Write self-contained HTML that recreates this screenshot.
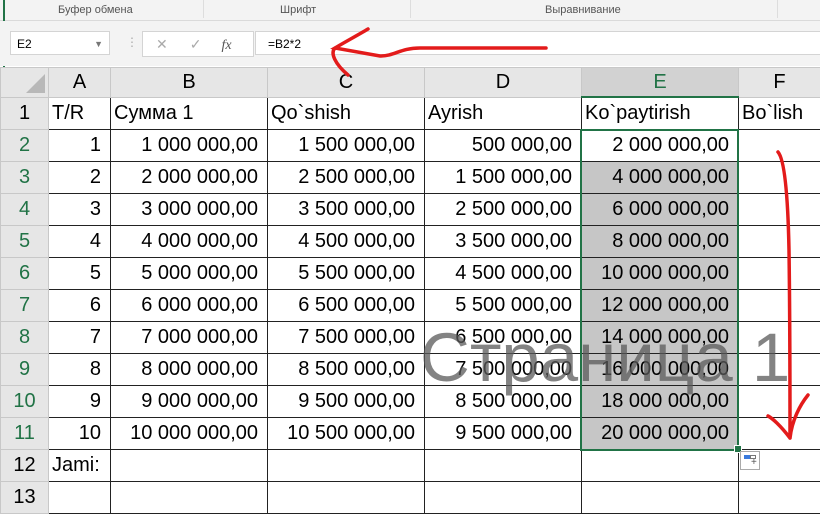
<!DOCTYPE html><html><head><style>
body{margin:0;width:820px;height:496px;overflow:hidden;background:#fff;font-family:"Liberation Sans",sans-serif;position:relative}
.ab{position:absolute}
.rib{left:0;top:0;width:820px;height:20px;background:#f3f3f3;border-bottom:1px solid #dadada;font-size:11px;color:#555}
.fb{left:0;top:21px;width:820px;height:45px;background:#f3f3f3}
.box{background:#fff;border:1px solid #d4d4d4;position:absolute}
table{position:absolute;left:0;top:67px;border-collapse:collapse;font-size:20px;table-layout:fixed;width:820px}
td{height:31px;padding:0 9px 0 3px;white-space:nowrap;border:1px solid #222;overflow:hidden}
tr.h td{height:28px;background:#e6e6e6;border:1px solid #c8c8c8;text-align:center;color:#000;font-size:20px;padding:0}
td.rh{background:#e6e6e6;border-color:#c8c8c8;text-align:center;color:#217346;padding:0}
td.n{text-align:right}
td.s{background:#c6c6c6}
</style></head><body>
<div class="ab rib"><span class="ab" style="left:58px;top:4px">Буфер обмена</span><span class="ab" style="left:280px;top:4px">Шрифт</span><span class="ab" style="left:545px;top:4px">Выравнивание</span>
<span class="ab" style="left:203px;top:0;width:1px;height:18px;background:#ddd"></span><span class="ab" style="left:410px;top:0;width:1px;height:18px;background:#ddd"></span><span class="ab" style="left:777px;top:0;width:1px;height:18px;background:#ddd"></span></div>
<div class="ab" style="left:3px;top:0;width:2px;height:496px;background:#217346"></div>
<div class="ab fb">
<div class="box" style="left:10px;top:10px;width:100px;height:24px;font-size:12px;line-height:24px;padding-left:6px;box-sizing:border-box">E2<span style="position:absolute;right:6px;color:#777;font-size:9px">▼</span></div>
<div class="ab" style="left:126px;top:14px;color:#aaa;font-size:12px">⋮</div>
<div class="box" style="left:142px;top:10px;width:110px;height:24px;color:#aaa;font-size:14px;line-height:24px"><span style="margin-left:13px">✕</span><span style="margin-left:22px">✓</span><span style="margin-left:20px;color:#555;font-style:italic;font-family:'Liberation Serif'">fx</span></div>
<div class="box" style="left:255px;top:10px;width:570px;height:24px;font-size:12px;line-height:24px;padding-left:12px;box-sizing:border-box">=B2*2</div>
</div>
<table>
<colgroup><col style="width:48px"><col style="width:62px"><col style="width:157px"><col style="width:157px"><col style="width:157px"><col style="width:157px"><col style="width:82px"></colgroup>
<tr class="h"><td style="padding:0;position:relative"><svg class="ab" style="left:25px;top:6px" width="20" height="20"><polygon points="19,0 19,19 0,19" fill="#b8b8b8"/></svg></td><td>A</td><td>B</td><td>C</td><td>D</td><td style="background:#d2d2d2;border-bottom:2px solid #217346;color:#217346">E</td><td>F</td></tr>
<tr><td class="rh" style="color:#000">1</td><td>T/R</td><td>Сумма 1</td><td>Qo`shish</td><td>Ayrish</td><td>Ko`paytirish</td><td>Bo`lish</td></tr>
<tr><td class="rh">2</td><td class="n">1</td><td class="n">1 000 000,00</td><td class="n">1 500 000,00</td><td class="n">500 000,00</td><td class="n">2 000 000,00</td><td></td></tr>
<tr><td class="rh">3</td><td class="n">2</td><td class="n">2 000 000,00</td><td class="n">2 500 000,00</td><td class="n">1 500 000,00</td><td class="n s">4 000 000,00</td><td></td></tr>
<tr><td class="rh">4</td><td class="n">3</td><td class="n">3 000 000,00</td><td class="n">3 500 000,00</td><td class="n">2 500 000,00</td><td class="n s">6 000 000,00</td><td></td></tr>
<tr><td class="rh">5</td><td class="n">4</td><td class="n">4 000 000,00</td><td class="n">4 500 000,00</td><td class="n">3 500 000,00</td><td class="n s">8 000 000,00</td><td></td></tr>
<tr><td class="rh">6</td><td class="n">5</td><td class="n">5 000 000,00</td><td class="n">5 500 000,00</td><td class="n">4 500 000,00</td><td class="n s">10 000 000,00</td><td></td></tr>
<tr><td class="rh">7</td><td class="n">6</td><td class="n">6 000 000,00</td><td class="n">6 500 000,00</td><td class="n">5 500 000,00</td><td class="n s">12 000 000,00</td><td></td></tr>
<tr><td class="rh">8</td><td class="n">7</td><td class="n">7 000 000,00</td><td class="n">7 500 000,00</td><td class="n">6 500 000,00</td><td class="n s">14 000 000,00</td><td></td></tr>
<tr><td class="rh">9</td><td class="n">8</td><td class="n">8 000 000,00</td><td class="n">8 500 000,00</td><td class="n">7 500 000,00</td><td class="n s">16 000 000,00</td><td></td></tr>
<tr><td class="rh">10</td><td class="n">9</td><td class="n">9 000 000,00</td><td class="n">9 500 000,00</td><td class="n">8 500 000,00</td><td class="n s">18 000 000,00</td><td></td></tr>
<tr><td class="rh">11</td><td class="n">10</td><td class="n">10 000 000,00</td><td class="n">10 500 000,00</td><td class="n">9 500 000,00</td><td class="n s">20 000 000,00</td><td></td></tr>
<tr><td class="rh" style="color:#000">12</td><td>Jami:</td><td></td><td></td><td></td><td></td><td></td></tr>
<tr><td class="rh" style="color:#000">13</td><td></td><td></td><td></td><td></td><td></td><td></td></tr>
</table>
<div class="ab" style="left:580px;top:129px;width:155px;height:318px;border:2px solid #217346"></div>
<div class="ab" style="left:734px;top:445px;width:6px;height:6px;background:#217346;border:1px solid #fff"></div>
<div class="ab" style="left:740px;top:451px;width:18px;height:17px;border:1px solid #aaa;background:#fff"><div class="ab" style="left:3px;top:3px;width:6px;height:4px;background:#3b7bdc"></div><div class="ab" style="left:9px;top:3px;width:6px;height:4px;border:1px solid #777;box-sizing:border-box"></div><span class="ab" style="left:10px;top:5px;font-size:10px;color:#555">+</span></div>
<div class="ab" style="left:420px;top:318px;font-size:69px;color:rgba(90,90,90,0.75);white-space:nowrap">Страница 1</div>
<svg class="ab" style="left:0;top:0" width="820" height="496"><g fill="none" stroke="#e31b1b" stroke-width="3.5" stroke-linecap="round">
<path d="M546,48 L420,48 C400,48 395,56 380,56 L335,48 C345,42 358,35 368,29 M335,48 C330,53 335,64 348,75"/>
<path d="M778,152 C785,160 788,200 789,250 C790,320 790,380 790,438 M790,438 C780,425 772,418 768,416 M790,438 C792,420 800,405 808,395"/>
</g></svg>
</body></html>
